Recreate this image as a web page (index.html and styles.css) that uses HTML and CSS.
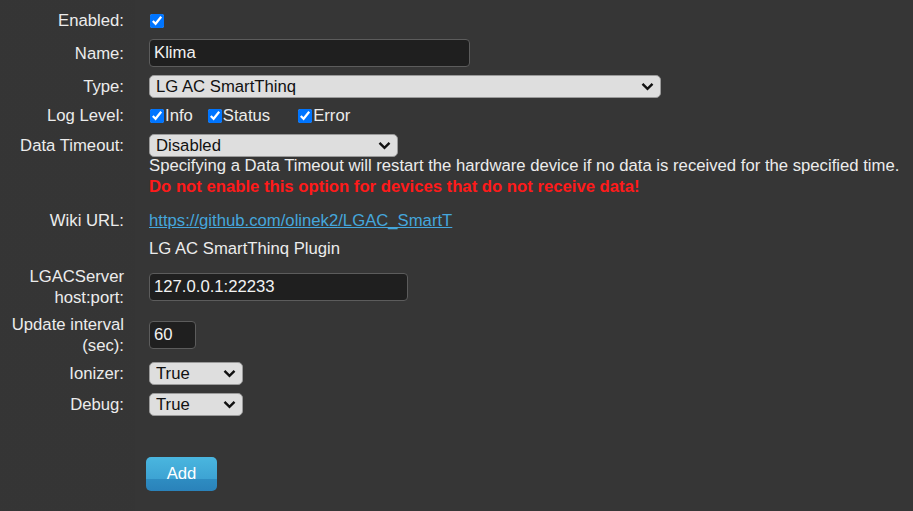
FILE: index.html
```html
<!DOCTYPE html>
<html>
<head>
<meta charset="utf-8">
<link rel="stylesheet" href="styles.css">
</head>
<body>
<form class="form">
  <div class="row">
    <label class="lbl">Enabled:</label>
    <div class="val"><input type="checkbox" class="cb" checked></div>
  </div>
  <div class="row r-name">
    <label class="lbl">Name:</label>
    <div class="val"><input type="text" class="txt w-name" value="Klima"></div>
  </div>
  <div class="row r-type">
    <label class="lbl">Type:</label>
    <div class="val"><select class="sel w-type"><option>LG AC SmartThinq</option></select></div>
  </div>
  <div class="row r-log">
    <label class="lbl">Log Level:</label>
    <div class="val checks">
      <span class="chk c-info"><input type="checkbox" class="cb" checked>Info</span>
      <span class="chk c-status"><input type="checkbox" class="cb" checked>Status</span>
      <span class="chk"><input type="checkbox" class="cb" checked>Error</span>
    </div>
  </div>
  <div class="row r-timeout">
    <label class="lbl top">Data Timeout:</label>
    <div class="val">
      <select class="sel w-timeout"><option>Disabled</option></select>
      <p class="help">Specifying a Data Timeout will restart the hardware device if no data is received for the specified time.</p>
      <p class="warn">Do not enable this option for devices that do not receive data!</p>
    </div>
  </div>
  <div class="row r-wiki">
    <label class="lbl">Wiki URL:</label>
    <div class="val"><a class="link" href="#">https://github.com/olinek2/LGAC_SmartT</a></div>
  </div>
  <div class="row">
    <span class="lbl"></span>
    <div class="val">LG AC SmartThinq Plugin</div>
  </div>
  <div class="row">
    <label class="lbl">LGACServer host:port:</label>
    <div class="val"><input type="text" class="txt w-host" value="127.0.0.1:22233"></div>
  </div>
  <div class="row r-upd">
    <label class="lbl">Update interval (sec):</label>
    <div class="val"><input type="text" class="txt w-upd" value="60"></div>
  </div>
  <div class="row r-ion">
    <label class="lbl">Ionizer:</label>
    <div class="val"><select class="sel w-small"><option>True</option></select></div>
  </div>
  <div class="row r-debug">
    <label class="lbl">Debug:</label>
    <div class="val"><select class="sel w-small"><option>True</option></select></div>
  </div>
  <div class="row r-btn">
    <span class="lbl"></span>
    <div class="val"><button type="button" class="btn">Add</button></div>
  </div>
</form>
</body>
</html>
```

FILE: styles.css
```css
html, body {
  margin: 0;
  padding: 0;
  height: 100%;
}
body {
  background-color: #363636;
  background-image:
    linear-gradient(90deg, rgba(0,0,0,0.015) 0, rgba(0,0,0,0.015) 135px, transparent 135px);
  font-family: "Liberation Sans", Arial, sans-serif;
  font-size: 16.7px;
  line-height: 21px;
  color: #ececec;
  overflow: hidden;
}
.form {
  display: flex;
  flex-direction: column;
  gap: 7px;
  padding-top: 10px;
}
.row {
  display: grid;
  grid-template-columns: 124px 1fr;
  column-gap: 25px;
  align-items: center;
}
.lbl {
  text-align: right;
  line-height: 21px;
}
.lbl.top {
  align-self: start;
  padding-top: 1px;
}
.val {
  display: flex;
  flex-direction: column;
  align-items: flex-start;
}
.r-name { margin-top: 1px; }
.r-type { margin-top: 1px; }
.r-timeout { margin-top: 1px; }
.r-wiki { margin-top: 6px; }
.r-upd { margin-top: -1px; }
.r-ion { margin-top: -1px; }
.r-debug { margin-top: 1px; }
.r-btn { margin-top: 34px; }

.cb {
  width: 14px;
  height: 14px;
  margin: 0 1px 0 1px;
  accent-color: #0075ff;
}
.checks {
  flex-direction: row;
  align-items: center;
}
.chk {
  display: inline-flex;
  align-items: center;
}
.c-info { margin-right: 14px; }
.c-status { margin-right: 27px; }

.txt {
  box-sizing: border-box;
  height: 28px;
  margin: 0;
  padding: 0 4px;
  background: #1f1f1f;
  color: #f2f2f2;
  border: 1px solid #5c5c5c;
  border-radius: 4px;
  font-family: "Liberation Sans", Arial, sans-serif;
  font-size: 16.7px;
  outline: none;
}
.w-name { width: 321px; }
.w-host { width: 259px; }
.w-upd { width: 47px; }

.sel {
  box-sizing: border-box;
  height: 23px;
  margin: 0;
  padding: 0 24px 0 6px;
  -webkit-appearance: none;
  appearance: none;
  background-color: #dedede;
  background-image: url("data:image/svg+xml;utf8,<svg xmlns='http://www.w3.org/2000/svg' width='13' height='9' viewBox='0 0 13 9'><path d='M1.5 1.8 L6.5 6.8 L11.5 1.8' fill='none' stroke='%23111' stroke-width='2.4'/></svg>");
  background-repeat: no-repeat;
  background-position: right 6px center;
  color: #111;
  border: 1px solid #9a9a9a;
  border-radius: 5px;
  font-family: "Liberation Sans", Arial, sans-serif;
  font-size: 16.7px;
  line-height: 21px;
}
.w-type { width: 512px; }
.w-timeout { width: 249px; }
.w-small { width: 94px; }

.help, .warn {
  margin: 0;
  line-height: 21px;
  white-space: nowrap;
}
.help { margin-top: -2px; }
.warn {
  color: #ff1a1a;
  font-weight: bold;
}
.link {
  color: #45a6dc;
  text-decoration: underline;
}

.btn {
  width: 71px;
  height: 34px;
  margin-left: -3px;
  padding: 0;
  border: 0;
  border-radius: 5px;
  color: #fff;
  font-family: "Liberation Sans", Arial, sans-serif;
  font-size: 16.7px;
  background: linear-gradient(180deg, #4ab6df 0%, #3da3d3 64%, #2e8cc1 66%, #2a82ba 100%);
}
```
